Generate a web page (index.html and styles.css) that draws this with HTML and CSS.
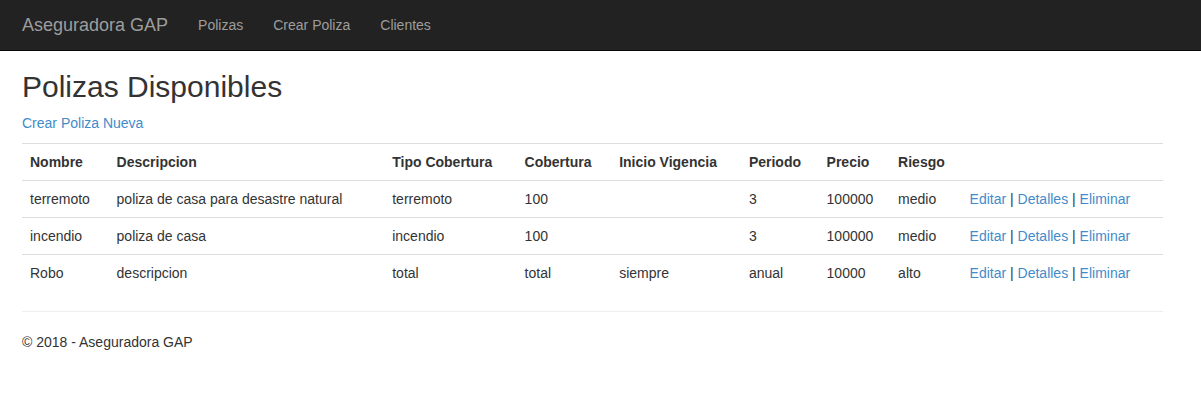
FILE: index.html
```html
<!DOCTYPE html>
<html lang="es">
<head>
<meta charset="utf-8">
<title>Polizas - Aseguradora GAP</title>
<link rel="stylesheet" href="styles.css">
</head>
<body>
<nav class="navbar">
  <a class="brand" href="#">Aseguradora GAP</a>
  <ul class="nav">
    <li><a href="#">Polizas</a></li>
    <li><a href="#">Crear Poliza</a></li>
    <li><a href="#">Clientes</a></li>
  </ul>
</nav>
<main class="content">
  <h2 class="title">Polizas Disponibles</h2>
  <p class="create"><a href="#">Crear Poliza Nueva</a></p>
  <table class="table">
    <tr>
      <th>Nombre</th>
      <th>Descripcion</th>
      <th>Tipo Cobertura</th>
      <th>Cobertura</th>
      <th>Inicio Vigencia</th>
      <th>Periodo</th>
      <th>Precio</th>
      <th>Riesgo</th>
      <th></th>
    </tr>
    <tr>
      <td>terremoto</td>
      <td>poliza de casa para desastre natural</td>
      <td>terremoto</td>
      <td>100</td>
      <td></td>
      <td>3</td>
      <td>100000</td>
      <td>medio</td>
      <td><a href="#">Editar</a> | <a href="#">Detalles</a> | <a href="#">Eliminar</a></td>
    </tr>
    <tr>
      <td>incendio</td>
      <td>poliza de casa</td>
      <td>incendio</td>
      <td>100</td>
      <td></td>
      <td>3</td>
      <td>100000</td>
      <td>medio</td>
      <td><a href="#">Editar</a> | <a href="#">Detalles</a> | <a href="#">Eliminar</a></td>
    </tr>
    <tr>
      <td>Robo</td>
      <td>descripcion</td>
      <td>total</td>
      <td>total</td>
      <td>siempre</td>
      <td>anual</td>
      <td>10000</td>
      <td>alto</td>
      <td><a href="#">Editar</a> | <a href="#">Detalles</a> | <a href="#">Eliminar</a></td>
    </tr>
  </table>
  <hr class="rule">
  <footer class="footer">
    <p>&copy; 2018 - Aseguradora GAP</p>
  </footer>
</main>
</body>
</html>
```

FILE: styles.css
```css
* { box-sizing: border-box; }
html, body {
  margin: 0;
  padding: 0;
  background: #fff;
}
body {
  font-family: "Liberation Sans", Arial, Helvetica, sans-serif;
  font-size: 14px;
  line-height: 20px;
  color: #333;
}
a {
  color: #428bca;
  text-decoration: none;
}
.navbar {
  display: flex;
  align-items: flex-start;
  height: 51px;
  background: #222;
  border-bottom: 1px solid #080808;
  padding-left: 7px;
  margin-bottom: -1px;
}
.brand {
  display: block;
  padding: 15px;
  font-size: 18px;
  line-height: 20px;
  color: #9d9d9d;
}
.nav {
  display: flex;
  list-style: none;
  margin: 0;
  padding: 0;
}
.nav a {
  display: block;
  padding: 15px;
  line-height: 20px;
  color: #9d9d9d;
}
.content {
  width: 1163px;
  padding-left: 22px;
}
.title {
  font-size: 30px;
  font-weight: 500;
  line-height: 33px;
  margin: 20px 0 10px;
}
.create {
  margin: 0 0 10px;
}
.table {
  width: 100%;
  border-collapse: collapse;
  border-spacing: 0;
  margin-bottom: 20px;
}
.table th,
.table td {
  padding: 8px;
  line-height: 20px;
  text-align: left;
  vertical-align: top;
  border-top: 1px solid #ddd;
}
.table th {
  font-weight: bold;
}
.rule {
  margin: 20px 0;
  border: 0;
  border-top: 1px solid #eee;
  height: 0;
}
.footer p {
  margin: 0 0 10px;
}
```
